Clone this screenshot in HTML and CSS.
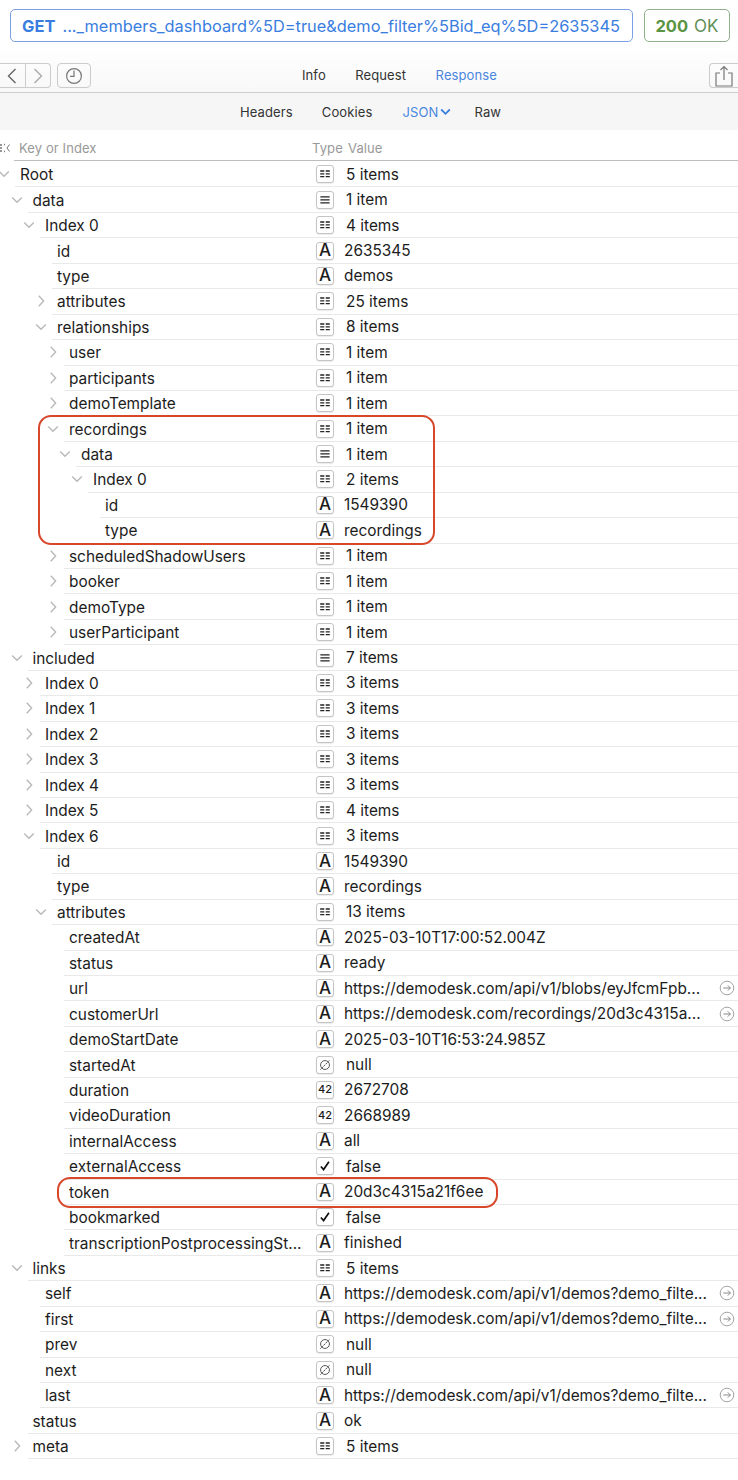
FILE: index.html
```html
<!DOCTYPE html>
<html lang="en">
<head>
  <meta charset="UTF-8">
  <meta name="viewport" content="width=device-width, initial-scale=1.0">
  <title>Response JSON</title>
  <link rel="stylesheet" href="styles.css">
</head>
<body>

  <!-- Icon sprite -->
  <svg class="sprite" xmlns="http://www.w3.org/2000/svg">
    <symbol id="dict" viewBox="0 0 18 18"><path d="M3.6 5.6h4.6M3.6 8.8h4.6M3.6 12h4.6M9.8 5.6h4.6M9.8 8.8h4.6M9.8 12h4.6" fill="none" stroke="#222" stroke-width="1.5"/></symbol>
    <symbol id="arr" viewBox="0 0 18 18"><path d="M3.8 5.4h10.4M3.8 8.8h10.4M3.8 12.2h10.4" fill="none" stroke="#222" stroke-width="1.5"/></symbol>
    <symbol id="check" viewBox="0 0 18 18"><path d="M4.4 9.6l3 3.4 6-8.8" fill="none" stroke="#111" stroke-width="1.9"/></symbol>
    <symbol id="null" viewBox="0 0 18 18"><circle cx="9" cy="9" r="5" fill="none" stroke="#444" stroke-width="1"/><path d="M3.8 14.2L14.2 3.6" fill="none" stroke="#333" stroke-width="1" stroke-dasharray="2 .8"/></symbol>
    <symbol id="down" viewBox="0 0 12 12"><path d="M1.2 3.4L6 8.2l4.8-4.8" fill="none" stroke="#b9b9b9" stroke-width="1.4"/></symbol>
    <symbol id="right" viewBox="0 0 12 12"><path d="M3.8.8L8.6 6l-4.8 5.2" fill="none" stroke="#b9b9b9" stroke-width="1.4"/></symbol>
    <symbol id="go" viewBox="0 0 16 16"><circle cx="8" cy="8" r="6.8" fill="none" stroke="#a3a3a3" stroke-width="1"/><path d="M4.4 8h7M8.8 5.4L11.4 8l-2.6 2.6" fill="none" stroke="#8a8a8a" stroke-width="1"/></symbol>
  </svg>

  <!-- Request line -->
  <div class="request-bar">
    <div class="url-box"><b>GET</b><span class="url">..._members_dashboard%5D=true&amp;demo_filter%5Bid_eq%5D=2635345</span></div>
    <div class="status-box"><b>200</b> OK</div>
  </div>

  <!-- Toolbar -->
  <div class="toolbar">
    <div class="nav-group">
      <div class="nav-btn">
        <svg width="12" height="18" viewBox="0 0 12 18"><path d="M9.5 2L2.5 9l7 7" fill="none" stroke="#666" stroke-width="1.4"/></svg>
      </div>
      <div class="nav-btn">
        <svg width="12" height="18" viewBox="0 0 12 18"><path d="M2.5 2l7 7-7 7" fill="none" stroke="#aaa" stroke-width="1.4"/></svg>
      </div>
    </div>
    <div class="history-btn">
      <svg width="18" height="18" viewBox="0 0 18 18"><circle cx="9" cy="9" r="7.4" fill="none" stroke="#777" stroke-width="1.2"/><path d="M9 3.6v5.8H5" fill="none" stroke="#777" stroke-width="1.2"/></svg>
    </div>
    <div class="tabs">
      <span>Info</span>
      <span>Request</span>
      <span class="active">Response</span>
    </div>
    <div class="share-btn">
      <svg width="20" height="22" viewBox="0 0 20 22"><path d="M6 8H2v13h16V8h-4M10 15V1.5M6.5 5L10 1.5 13.5 5" fill="none" stroke="#777" stroke-width="1.2"/></svg>
    </div>
  </div>

  <!-- Sub tabs -->
  <div class="subtabs">
    <span class="sub-headers">Headers</span>
    <span class="sub-cookies">Cookies</span>
    <span class="sub-json">JSON<svg width="11" height="8" viewBox="0 0 11 8"><path d="M1.2 1.5l4.3 4.3 4.3-4.3" fill="none" stroke="#3b7fe0" stroke-width="1.8"/></svg></span>
    <span class="sub-raw">Raw</span>
  </div>

  <!-- Column heads -->
  <div class="col-head">
    <svg class="collapse" width="10" height="12" viewBox="0 0 10 12"><path d="M0 3h2M0 6h2M0 9h2M4 2.5h1M4 9.5h1" stroke="#777" stroke-width="1.6"/><path d="M9.5 2.5L7 6l2.5 3.5" fill="none" stroke="#777" stroke-width="1"/></svg>
    <span class="head-key">Key or Index</span>
    <span class="head-type">Type</span>
    <span class="head-value">Value</span>
  </div>

  <!-- Tree -->
  <div class="tree">
    <div class="row lv0"><svg class="chev"><use href="#down"/></svg><div class="key">Root</div><div class="cell"><div class="ty"><svg><use href="#dict"/></svg></div><span class="val boxed">5 items</span></div></div>
    <div class="row lv1"><svg class="chev"><use href="#down"/></svg><div class="key">data</div><div class="cell"><div class="ty"><svg><use href="#arr"/></svg></div><span class="val boxed">1 item</span></div></div>
    <div class="row lv2"><svg class="chev"><use href="#down"/></svg><div class="key">Index 0</div><div class="cell"><div class="ty"><svg><use href="#dict"/></svg></div><span class="val boxed">4 items</span></div></div>
    <div class="row lv3"><div class="key">id</div><div class="cell"><div class="ty a">A</div><span class="val">2635345</span></div></div>
    <div class="row lv3"><div class="key">type</div><div class="cell"><div class="ty a">A</div><span class="val">demos</span></div></div>
    <div class="row lv3"><svg class="chev"><use href="#right"/></svg><div class="key">attributes</div><div class="cell"><div class="ty"><svg><use href="#dict"/></svg></div><span class="val boxed">25 items</span></div></div>
    <div class="row lv3"><svg class="chev"><use href="#down"/></svg><div class="key">relationships</div><div class="cell"><div class="ty"><svg><use href="#dict"/></svg></div><span class="val boxed">8 items</span></div></div>
    <div class="row lv4"><svg class="chev"><use href="#right"/></svg><div class="key">user</div><div class="cell"><div class="ty"><svg><use href="#dict"/></svg></div><span class="val boxed">1 item</span></div></div>
    <div class="row lv4"><svg class="chev"><use href="#right"/></svg><div class="key">participants</div><div class="cell"><div class="ty"><svg><use href="#dict"/></svg></div><span class="val boxed">1 item</span></div></div>
    <div class="row lv4"><svg class="chev"><use href="#right"/></svg><div class="key">demoTemplate</div><div class="cell"><div class="ty"><svg><use href="#dict"/></svg></div><span class="val boxed">1 item</span></div></div>
    <div class="row lv4"><svg class="chev"><use href="#down"/></svg><div class="key">recordings</div><div class="cell"><div class="ty"><svg><use href="#dict"/></svg></div><span class="val boxed">1 item</span></div></div>
    <div class="row lv5"><svg class="chev"><use href="#down"/></svg><div class="key">data</div><div class="cell"><div class="ty"><svg><use href="#arr"/></svg></div><span class="val boxed">1 item</span></div></div>
    <div class="row lv6"><svg class="chev"><use href="#down"/></svg><div class="key">Index 0</div><div class="cell"><div class="ty"><svg><use href="#dict"/></svg></div><span class="val boxed">2 items</span></div></div>
    <div class="row lv7"><div class="key">id</div><div class="cell"><div class="ty a">A</div><span class="val">1549390</span></div></div>
    <div class="row lv7"><div class="key">type</div><div class="cell"><div class="ty a">A</div><span class="val">recordings</span></div></div>
    <div class="row lv4"><svg class="chev"><use href="#right"/></svg><div class="key">scheduledShadowUsers</div><div class="cell"><div class="ty"><svg><use href="#dict"/></svg></div><span class="val boxed">1 item</span></div></div>
    <div class="row lv4"><svg class="chev"><use href="#right"/></svg><div class="key">booker</div><div class="cell"><div class="ty"><svg><use href="#dict"/></svg></div><span class="val boxed">1 item</span></div></div>
    <div class="row lv4"><svg class="chev"><use href="#right"/></svg><div class="key">demoType</div><div class="cell"><div class="ty"><svg><use href="#dict"/></svg></div><span class="val boxed">1 item</span></div></div>
    <div class="row lv4"><svg class="chev"><use href="#right"/></svg><div class="key">userParticipant</div><div class="cell"><div class="ty"><svg><use href="#dict"/></svg></div><span class="val boxed">1 item</span></div></div>
    <div class="row lv1"><svg class="chev"><use href="#down"/></svg><div class="key">included</div><div class="cell"><div class="ty"><svg><use href="#arr"/></svg></div><span class="val boxed">7 items</span></div></div>
    <div class="row lv2"><svg class="chev"><use href="#right"/></svg><div class="key">Index 0</div><div class="cell"><div class="ty"><svg><use href="#dict"/></svg></div><span class="val boxed">3 items</span></div></div>
    <div class="row lv2"><svg class="chev"><use href="#right"/></svg><div class="key">Index 1</div><div class="cell"><div class="ty"><svg><use href="#dict"/></svg></div><span class="val boxed">3 items</span></div></div>
    <div class="row lv2"><svg class="chev"><use href="#right"/></svg><div class="key">Index 2</div><div class="cell"><div class="ty"><svg><use href="#dict"/></svg></div><span class="val boxed">3 items</span></div></div>
    <div class="row lv2"><svg class="chev"><use href="#right"/></svg><div class="key">Index 3</div><div class="cell"><div class="ty"><svg><use href="#dict"/></svg></div><span class="val boxed">3 items</span></div></div>
    <div class="row lv2"><svg class="chev"><use href="#right"/></svg><div class="key">Index 4</div><div class="cell"><div class="ty"><svg><use href="#dict"/></svg></div><span class="val boxed">3 items</span></div></div>
    <div class="row lv2"><svg class="chev"><use href="#right"/></svg><div class="key">Index 5</div><div class="cell"><div class="ty"><svg><use href="#dict"/></svg></div><span class="val boxed">4 items</span></div></div>
    <div class="row lv2"><svg class="chev"><use href="#down"/></svg><div class="key">Index 6</div><div class="cell"><div class="ty"><svg><use href="#dict"/></svg></div><span class="val boxed">3 items</span></div></div>
    <div class="row lv3"><div class="key">id</div><div class="cell"><div class="ty a">A</div><span class="val">1549390</span></div></div>
    <div class="row lv3"><div class="key">type</div><div class="cell"><div class="ty a">A</div><span class="val">recordings</span></div></div>
    <div class="row lv3"><svg class="chev"><use href="#down"/></svg><div class="key">attributes</div><div class="cell"><div class="ty"><svg><use href="#dict"/></svg></div><span class="val boxed">13 items</span></div></div>
    <div class="row lv4"><div class="key">createdAt</div><div class="cell"><div class="ty a">A</div><span class="val">2025-03-10T17:00:52.004Z</span></div></div>
    <div class="row lv4"><div class="key">status</div><div class="cell"><div class="ty a">A</div><span class="val">ready</span></div></div>
    <div class="row lv4"><div class="key">url</div><div class="cell"><div class="ty a">A</div><span class="val">https://demodesk.com/api/v1/blobs/eyJfcmFpb...</span><svg class="go"><use href="#go"/></svg></div></div>
    <div class="row lv4"><div class="key">customerUrl</div><div class="cell"><div class="ty a">A</div><span class="val">https://demodesk.com/recordings/20d3c4315a...</span><svg class="go"><use href="#go"/></svg></div></div>
    <div class="row lv4"><div class="key">demoStartDate</div><div class="cell"><div class="ty a">A</div><span class="val">2025-03-10T16:53:24.985Z</span></div></div>
    <div class="row lv4"><div class="key">startedAt</div><div class="cell"><div class="ty"><svg><use href="#null"/></svg></div><span class="val boxed">null</span></div></div>
    <div class="row lv4"><div class="key">duration</div><div class="cell"><div class="ty n">42</div><span class="val">2672708</span></div></div>
    <div class="row lv4"><div class="key">videoDuration</div><div class="cell"><div class="ty n">42</div><span class="val">2668989</span></div></div>
    <div class="row lv4"><div class="key">internalAccess</div><div class="cell"><div class="ty a">A</div><span class="val">all</span></div></div>
    <div class="row lv4"><div class="key">externalAccess</div><div class="cell"><div class="ty"><svg><use href="#check"/></svg></div><span class="val boxed">false</span></div></div>
    <div class="row lv4"><div class="key">token</div><div class="cell"><div class="ty a">A</div><span class="val">20d3c4315a21f6ee</span></div></div>
    <div class="row lv4"><div class="key">bookmarked</div><div class="cell"><div class="ty"><svg><use href="#check"/></svg></div><span class="val boxed">false</span></div></div>
    <div class="row lv4"><div class="key">transcriptionPostprocessingSt...</div><div class="cell"><div class="ty a">A</div><span class="val">finished</span></div></div>
    <div class="row lv1"><svg class="chev"><use href="#down"/></svg><div class="key">links</div><div class="cell"><div class="ty"><svg><use href="#dict"/></svg></div><span class="val boxed">5 items</span></div></div>
    <div class="row lv2"><div class="key">self</div><div class="cell"><div class="ty a">A</div><span class="val">https://demodesk.com/api/v1/demos?demo_filte...</span><svg class="go"><use href="#go"/></svg></div></div>
    <div class="row lv2"><div class="key">first</div><div class="cell"><div class="ty a">A</div><span class="val">https://demodesk.com/api/v1/demos?demo_filte...</span><svg class="go"><use href="#go"/></svg></div></div>
    <div class="row lv2"><div class="key">prev</div><div class="cell"><div class="ty"><svg><use href="#null"/></svg></div><span class="val boxed">null</span></div></div>
    <div class="row lv2"><div class="key">next</div><div class="cell"><div class="ty"><svg><use href="#null"/></svg></div><span class="val boxed">null</span></div></div>
    <div class="row lv2"><div class="key">last</div><div class="cell"><div class="ty a">A</div><span class="val">https://demodesk.com/api/v1/demos?demo_filte...</span><svg class="go"><use href="#go"/></svg></div></div>
    <div class="row lv1"><div class="key">status</div><div class="cell"><div class="ty a">A</div><span class="val">ok</span></div></div>
    <div class="row lv1"><svg class="chev"><use href="#right"/></svg><div class="key">meta</div><div class="cell"><div class="ty"><svg><use href="#dict"/></svg></div><span class="val boxed">5 items</span></div></div>

    <!-- Red annotations -->
    <div class="callout callout-recordings"></div>
    <div class="callout callout-token"></div>
  </div>

</body>
</html>
```

FILE: styles.css
```css
html, body { margin: 0; padding: 0; background: #fff; }
body { width: 738px; height: 1480px; overflow: hidden; font-family: Inter, "Noto Sans", sans-serif; color: #1c1c1c; }
.sprite { display: none; }

.request-bar { display: flex; gap: 11px; height: 43px; padding: 9px 8px 0 10px; box-sizing: border-box; }
.url-box { width: 623px; height: 33px; box-sizing: border-box; border: 1.5px solid #7ba0e4; border-radius: 5px; padding-left: 11px; display: flex; align-items: center; color: #3a7de0; font-size: 16.5px; white-space: nowrap; }
.url-box b { font-weight: 700; margin-right: 7px; }
.url { font-size: 16.35px; }
.status-box { flex: 1; height: 33px; box-sizing: border-box; border: 1.5px solid #8db088; border-radius: 5px; display: flex; align-items: center; justify-content: center; gap: 6px; color: #5f8f55; font-size: 17px; }
.status-box b { font-weight: 700; font-size: 16.5px; color: #5a9444; }

.toolbar { height: 50px; box-sizing: border-box; padding-top: 20px; display: flex; align-items: flex-start; background: linear-gradient(#fff, #f8f8f8); border-bottom: 1.5px solid #cfcfcf; }
.nav-group { display: flex; width: 51px; height: 25px; box-sizing: border-box; border: 1px solid #ccc; border-left: 0; border-radius: 0 4px 4px 0; }
.nav-btn { flex: 1; display: flex; align-items: center; justify-content: center; }
.nav-btn + .nav-btn { border-left: 1px solid #ccc; }
.history-btn { width: 34px; height: 25px; margin-left: 6px; box-sizing: border-box; border: 1px solid #ccc; border-radius: 4px; display: flex; align-items: center; justify-content: center; }
.tabs { display: flex; gap: 29.5px; margin-left: 211px; font-size: 13px; line-height: 24px; color: #333; letter-spacing: .1px; }
.tabs .active { color: #4a86e0; }
.share-btn { width: 29px; height: 25px; margin-left: auto; box-sizing: border-box; border: 1px solid #ccc; border-right: 0; border-radius: 4px 0 0 4px; display: flex; justify-content: center; align-items: flex-end; }

.subtabs { height: 37px; background: #f6f6f6; display: flex; align-items: center; font-size: 13px; letter-spacing: .12px; color: #333; }
.sub-headers { margin-left: 240px; }
.sub-cookies { margin-left: 29px; }
.sub-json { margin-left: 30px; color: #4a86e0; display: flex; align-items: center; gap: 2px; }
.sub-raw { margin-left: 23px; }

.col-head { height: 31px; box-sizing: border-box; padding-top: 4px; position: relative; display: flex; align-items: center; font-size: 13px; color: #999; letter-spacing: .1px; }
.col-head::after { content: ""; position: absolute; left: 14px; right: 0; bottom: 0; height: 1px; background: #bdbdbd; }
.collapse { flex: none; }
.head-key { margin-left: 9px; }
.head-type { position: absolute; left: 312px; }
.head-value { position: absolute; left: 348px; }

.tree { position: relative; padding-top: 1px; }
.row { height: 25.44px; box-sizing: border-box; display: flex; align-items: center; border-bottom: 1.2px solid #e9e9e9; }
.lv0 { margin-left: 15px; }
.lv1 { margin-left: 27.5px; }
.lv2 { margin-left: 40px; }
.lv3 { margin-left: 52px; }
.lv4 { margin-left: 64px; }
.lv5 { margin-left: 76px; }
.lv6 { margin-left: 88px; }
.lv7 { margin-left: 100px; }

.chev { flex: none; width: 12px; height: 12px; margin-left: -17px; margin-right: 5px; }
.key { flex: 1; min-width: 0; padding-left: 5px; padding-top: 1px; font-size: 15.4px; white-space: nowrap; }
.cell { flex: none; width: 422px; display: flex; align-items: center; font-size: 15.4px; height: 100%; box-sizing: border-box; }
.ty { flex: none; width: 18px; height: 18px; box-sizing: border-box; border: 1px solid #c4c4c4; border-radius: 3px; background: #fff; box-shadow: 0 1px 1px rgba(0,0,0,.08); display: flex; align-items: center; justify-content: center; color: #1c1c1c; line-height: 1; }
.ty svg { width: 16px; height: 16px; }
.ty.a { font-size: 17px; font-weight: 500; }
.ty.n { font-size: 11px; font-weight: 500; }
.val { margin-left: 10px; white-space: nowrap; }
.val.boxed { margin-left: 12px; }
.go { width: 16px; height: 16px; margin-left: auto; margin-right: 3px; flex: none; }

.callout { position: absolute; box-sizing: border-box; border: 2.5px solid #d9472b; border-radius: 13px; }
.callout-recordings { left: 38px; top: 254px; width: 397px; height: 130px; }
.callout-token { left: 57px; top: 1016px; width: 441px; height: 31px; }
```
